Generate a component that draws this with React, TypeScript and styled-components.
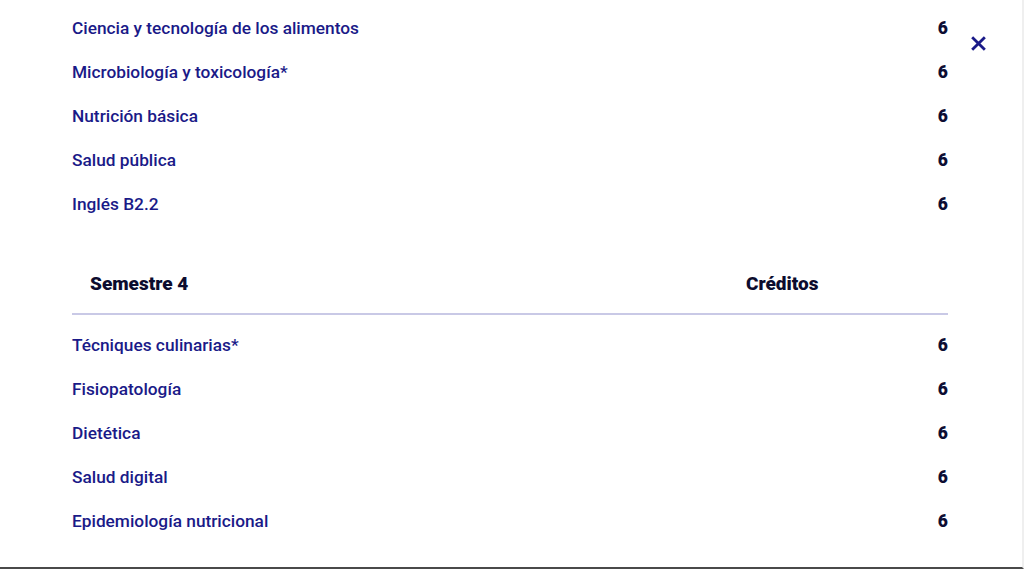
import React from "react";
import styled, { createGlobalStyle } from "styled-components";

const Global = createGlobalStyle`
  html, body { margin: 0; padding: 0; background: #ffffff; }
  body { font-family: Roboto, "Liberation Sans", sans-serif; overflow: hidden; }
  #root { height: 569px; }
`;

const Viewport = styled.div`
  position: relative;
  width: 1024px;
  height: 569px;
  box-sizing: border-box;
  border-bottom: 2px solid #4a4a4a;
  border-right: 2px solid #efefef;
  background: #fff;
  overflow: hidden;
`;

const Content = styled.div`
  width: 876px;
  margin-left: 72px;
  padding-top: 6px;
  display: flex;
  flex-direction: column;
`;

const List = styled.ul<{ $top?: number }>`
  list-style: none;
  margin: ${(p) => p.$top ?? 0}px 0 0 0;
  padding: 0;
`;

const Row = styled.li`
  display: flex;
  align-items: center;
  justify-content: space-between;
  height: 44px;
`;

const Subject = styled.span`
  color: #1a1a88;
  font-size: 17.3px;
  font-weight: 500;
`;

const Credits = styled.span`
  color: #0d0d33;
  font-size: 17.5px;
  font-weight: 900;
`;

const Header = styled.div`
  display: grid;
  grid-template-columns: 1fr 202px;
  align-items: center;
  margin-top: 35px;
  padding: 0 0 8px 18px;
  height: 44px;
  border-bottom: 2px solid #c9c9e6;
`;

const HeaderCell = styled.span`
  color: #0c0c2e;
  font-size: 19px;
  font-weight: 900;
`;

const Close = styled.button`
  position: absolute;
  top: 35px;
  left: 970px;
  width: 17px;
  height: 17px;
  padding: 0;
  border: 0;
  background: none;
  display: flex;
  align-items: center;
  justify-content: center;
  cursor: pointer;
`;

const sem3 = [
  "Ciencia y tecnología de los alimentos",
  "Microbiología y toxicología*",
  "Nutrición básica",
  "Salud pública",
  "Inglés B2.2",
];

const sem4 = [
  "Técniques culinarias*",
  "Fisiopatología",
  "Dietética",
  "Salud digital",
  "Epidemiología nutricional",
];

export default function App() {
  return (
    <>
      <Global />
      <Viewport>
        <Content>
          <List>
            {sem3.map((s) => (
              <Row key={s}>
                <Subject>{s}</Subject>
                <Credits>6</Credits>
              </Row>
            ))}
          </List>
          <Header>
            <HeaderCell>Semestre 4</HeaderCell>
            <HeaderCell>Créditos</HeaderCell>
          </Header>
          <List $top={8}>
            {sem4.map((s) => (
              <Row key={s}>
                <Subject>{s}</Subject>
                <Credits>6</Credits>
              </Row>
            ))}
          </List>
        </Content>
        <Close aria-label="Cerrar">
          <svg width="15" height="15" viewBox="0 0 14 14">
            <path d="M2 2 L12 12 M12 2 L2 12" stroke="#1a1a88" strokeWidth="2.6" strokeLinecap="square" />
          </svg>
        </Close>
      </Viewport>
    </>
  );
}
